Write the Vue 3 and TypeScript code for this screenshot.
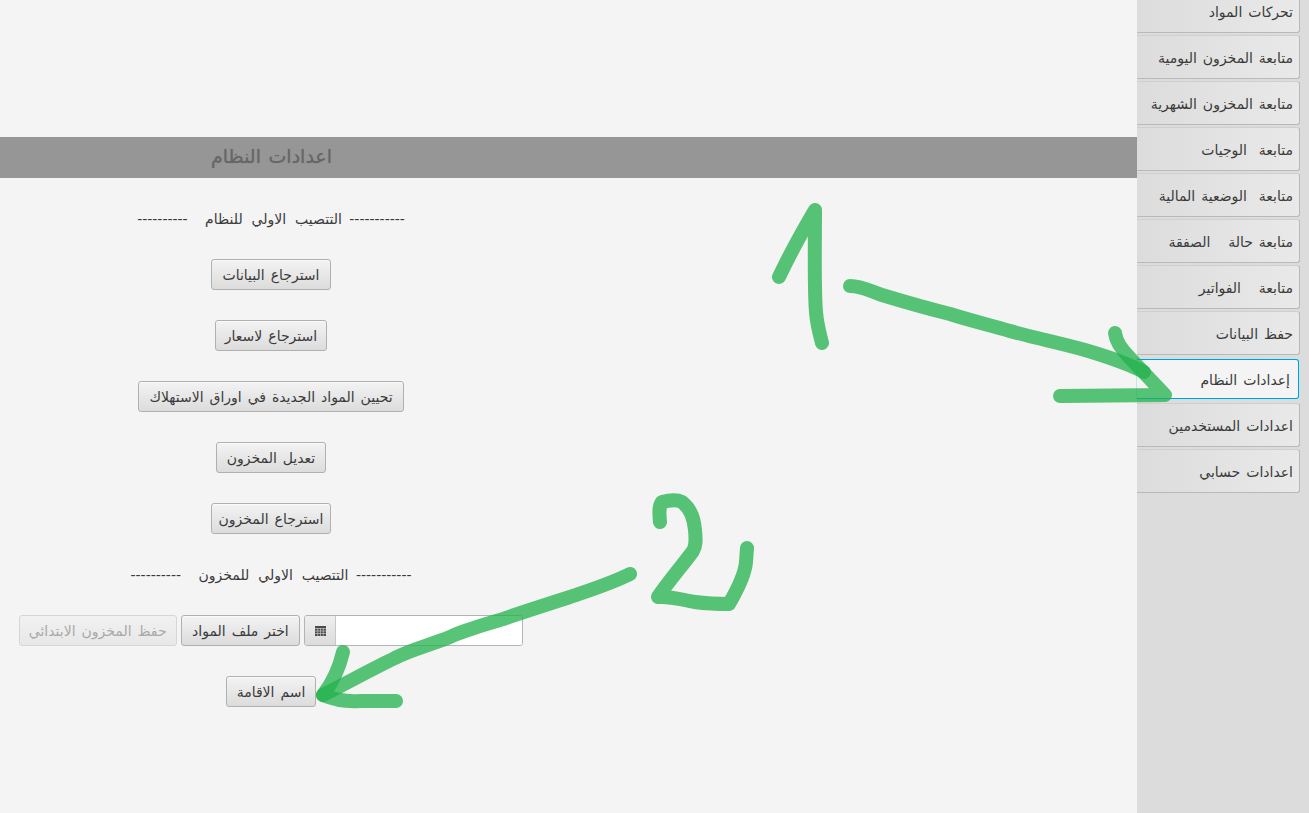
<script setup lang="ts">
const navItems = [
  'تحركات المواد',
  'متابعة المخزون اليومية',
  'متابعة المخزون الشهرية',
  'متابعة  الوجيات',
  'متابعة  الوضعية المالية',
  'متابعة حالة   الصفقة',
  'متابعة   الفواتير',
  'حفظ البيانات',
  'إعدادات النظام',
  'اعدادات المستخدمين',
  'اعدادات حسابي',
]
const strokes = [
  'M779 277 C788 258 802 232 815 210 C815 240 814 290 816 312 C817 325 820 335 822 343',
  'M850 286 C862 286 870 291 882 295 C905 302 930 309 950 314 C972 321 990 325 1010 331 C1035 338 1060 343 1085 350 C1105 356 1125 362 1144 372',
  'M1115 333 C1116 342 1122 350 1130 358 L1165 395 L1060 396',
  'M630 574 C610 584 590 590 570 597 C545 605 520 613 500 620 C480 626 465 630 450 637 C430 645 410 650 395 658 C370 670 345 684 323 695',
  'M343 652 C340 665 333 682 323 695 C335 700 345 702 360 701 L396 701',
  'M660 522 C659 512 659 506 662 502 C670 500 678 500 682 502 C690 508 694 518 695 530 C696 540 696 546 693 551 C682 566 668 582 658 597 C672 596 682 600 695 602 C710 604 720 604 729 604 C736 592 745 575 746 562 L747 548',
]
</script>

<template>
  <div class="page">
    <main class="main">
      <div class="top-space"></div>
      <header class="bar"><h1 class="bar-title">اعدادات النظام</h1></header>
      <section class="content">
        <p class="label"><span class="dashes">-----------</span> <span class="label-text">التتصيب الاولي للنظام</span> <span class="dashes tail">----------</span></p>
        <button class="btn">استرجاع البيانات</button>
        <button class="btn slim">استرجاع لاسعار</button>
        <button class="btn">تحيين المواد الجديدة في اوراق الاستهلاك</button>
        <button class="btn">تعديل المخزون</button>
        <button class="btn tight">استرجاع المخزون</button>
        <p class="label second"><span class="dashes">-----------</span> <span class="label-text">التتصيب الاولي للمخزون</span> <span class="dashes tail">----------</span></p>
        <div class="file-row">
          <button class="btn slim" disabled>حفظ المخزون الابتدائي</button>
          <button class="btn">اختر ملف المواد</button>
          <div class="picker">
            <span class="picker-icon">
              <svg width="11" height="10" viewBox="0 0 11 10">
                <rect width="11" height="10" fill="#4a4a4a" />
                <path d="M0 2.5H11M0 5H11M0 7.5H11M2.75 2V10M5.5 2V10M8.25 2V10" stroke="#c8c8c8" stroke-width=".7" />
              </svg>
            </span>
            <span class="picker-input"></span>
          </div>
        </div>
        <button class="btn">اسم الاقامة</button>
      </section>
    </main>
    <nav class="side">
      <button v-for="item in navItems" :key="item" class="nav-btn" :class="{ selected: item === 'إعدادات النظام' }"><span class="nav-text">{{ item }}</span></button>
    </nav>
    <svg class="ink" width="1309" height="813" viewBox="0 0 1309 813" fill="none">
      <path v-for="d in strokes" :key="d" :d="d" />
    </svg>
  </div>
</template>

<style>
html, body { margin: 0; overflow: hidden; }
</style>

<style scoped>
.page {
  position: relative;
  display: flex;
  width: 1309px;
  height: 813px;
  overflow: hidden;
  background: #f4f4f4;
  font-family: "DejaVu Sans", sans-serif;
  font-size: 14px;
  word-spacing: 1.5px;
  color: #3a3a3a;
}
.main { width: 1137px; flex: none; }
.top-space { height: 137px; }
.bar {
  height: 41px;
  background: #969696;
  display: flex;
  align-items: center;
  justify-content: flex-start;
  padding: 0 0 3px 211px;
  box-sizing: border-box;
  width: 100%;
}
.bar-title {
  margin: 0;
  direction: rtl;
  font-size: 19px;
  font-weight: 400;
  color: #666;
  text-shadow: 0 0 1px #777;
  width: 121px;
  text-align: center;
  white-space: nowrap;
}
.content {
  width: 542px;
  padding-top: 31px;
  display: flex;
  flex-direction: column;
  align-items: center;
  gap: 30px;
}
.label {
  margin: 0;
  height: 20px;
  line-height: 21px;
  direction: rtl;
  white-space: pre;
  word-spacing: 3px;
}
.label.second { margin-bottom: 1px; line-height: 22px; }
.label-text { word-spacing: 4.5px; }
.dashes { letter-spacing: .6px; }
.dashes.tail { margin-right: 10px; }
.btn {
  height: 31px;
  box-sizing: border-box;
  padding: 1px 10px 0;
  border: 1px solid #b0b0b0;
  border-radius: 3px;
  background: linear-gradient(#f3f3f3, #dcdcdc);
  box-shadow: inset 0 1px 0 #fafafa;
  font: inherit;
  word-spacing: inherit;
  color: #3a3a3a;
  direction: rtl;
  white-space: pre;
}
.btn.slim { padding: 1px 9px 0; }
.btn.tight { padding: 1px 7px 0; }
.btn:disabled {
  color: #a9a9a9;
  border-color: #d6d6d6;
  background: linear-gradient(#f1f1f1, #e8e8e8);
  box-shadow: none;
}
.file-row {
  display: flex;
  gap: 4.5px;
  align-items: center;
  height: 31px;
}
.picker {
  display: flex;
  width: 219px;
  height: 31px;
  box-sizing: border-box;
  border: 1px solid #b4b4b4;
  border-radius: 3px;
  overflow: hidden;
}
.picker-icon {
  width: 30px;
  flex: none;
  display: flex;
  align-items: center;
  justify-content: center;
  background: linear-gradient(#efefef, #dcdcdc);
  border-right: 1px solid #c8c8c8;
}
.picker-input { flex: 1; background: #fff; }
.side {
  flex: 1;
  background: #dcdcdc;
  padding: 0 9px 0 0;
  margin-top: -11px;
  display: flex;
  flex-direction: column;
  gap: 2px;
  height: 824px;
}
.nav-btn {
  height: 44px;
  flex: none;
  box-sizing: border-box;
  border: 1px solid #b9b9b9;
  border-top-color: #cfcfcf;
  border-left: none;
  border-radius: 0 3px 3px 0;
  background: linear-gradient(90deg, #dcdcdc, #e9e9e9);
  font: inherit;
  word-spacing: inherit;
  color: #3a3a3a;
  direction: rtl;
  text-align: right;
  padding: 2px 6px 0;
  white-space: pre;
}
.nav-btn.selected {
  background: #f4f4f4;
  border: 1px solid #039ed3;
  border-left: none;
  box-shadow: 0 0 0 1px #bfe6f3;
  height: 40px;
  margin: 2px 1px 2px 0;
  padding-right: 8px;
}
.ink { position: absolute; inset: 0; pointer-events: none; }
.ink path {
  stroke: #22b14c;
  stroke-opacity: .76;
  stroke-width: 14;
  stroke-linecap: round;
  stroke-linejoin: round;
}
</style>
